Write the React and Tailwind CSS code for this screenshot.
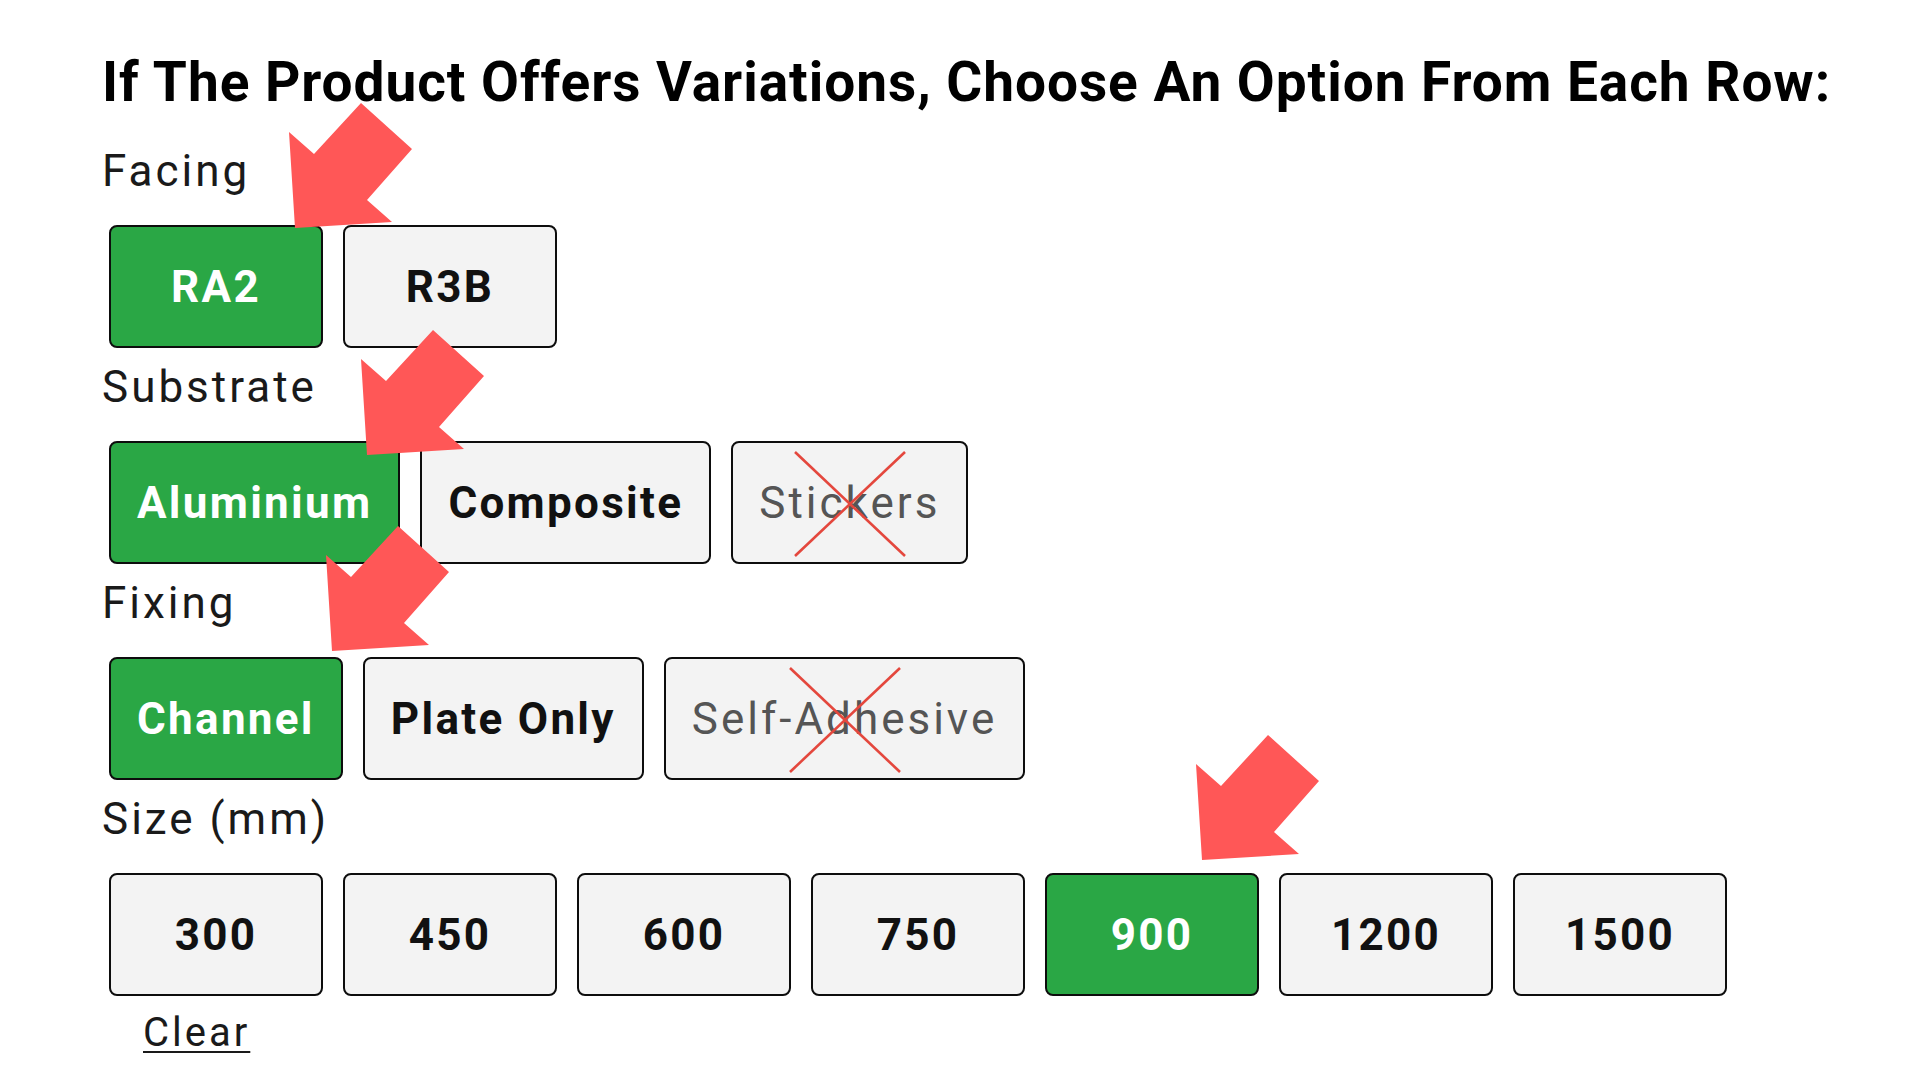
import React from "react";

// Option rows shown on the product page
const sections = [
  {
    label: "Facing",
    options: [{ text: "RA2", selected: true }, { text: "R3B" }],
  },
  {
    label: "Substrate",
    options: [
      { text: "Aluminium", selected: true },
      { text: "Composite" },
      { text: "Stickers", disabled: true },
    ],
  },
  {
    label: "Fixing",
    options: [
      { text: "Channel", selected: true },
      { text: "Plate Only" },
      { text: "Self-Adhesive", disabled: true },
    ],
  },
  {
    label: "Size (mm)",
    options: [
      { text: "300" },
      { text: "450" },
      { text: "600" },
      { text: "750" },
      { text: "900", selected: true },
      { text: "1200" },
      { text: "1500" },
    ],
  },
];

// Big red pointer arrows laid over the page
const arrows = [
  { left: 289, top: 103 },
  { left: 361, top: 330 },
  { left: 326, top: 526 },
  { left: 1196, top: 735 },
];

const Arrow = ({ left, top }) => (
  <svg
    width="124"
    height="126"
    viewBox="0 0 124 126"
    className="absolute"
    style={{ left, top }}
  >
    <polygon
      points="72,0 123,46 78,97 103,119 6,125 0,29 25,51"
      fill="#ff5757"
    />
  </svg>
);

const OptionButton = ({ option }) => {
  let tone = "bg-[#f3f3f3] text-[#111] font-bold tracking-[2.3px]";
  if (option.selected) tone = "bg-[#2aa745] text-white font-bold tracking-[2.3px]";
  if (option.disabled) tone = "bg-[#f3f3f3] text-[#555] font-normal tracking-[3px]";

  return (
    <button
      type="button"
      className={`relative flex h-[123px] min-w-[214px] items-center justify-center rounded-[8px] border-[2.5px] border-[#0d0d0d] px-[26px] text-[44px] leading-none ${tone}`}
    >
      {option.text}
      {option.disabled && (
        <svg
          width="112"
          height="106"
          viewBox="0 0 112 106"
          className="absolute left-1/2 top-[8px] -translate-x-1/2"
        >
          <line x1="1" y1="1" x2="111" y2="105" stroke="#e4473d" strokeWidth="2.6" />
          <line x1="111" y1="1" x2="1" y2="105" stroke="#e4473d" strokeWidth="2.6" />
        </svg>
      )}
    </button>
  );
};

export default function App() {
  return (
    <div className="relative min-h-screen bg-white font-[family-name:Roboto,sans-serif] text-[#111]">
      <div className="pl-[102px] pt-[50px]">
        <h1 className="text-[55px] font-bold leading-[64px] tracking-[0.95px] text-black">
          If The Product Offers Variations, Choose An Option From Each Row:
        </h1>

        <div className="mt-[31px] flex flex-col gap-[13px]">
          {sections.map((section) => (
            <div key={section.label}>
              <p className="text-[44px] leading-[52px] tracking-[3px] text-[#1a1a1a]">
                {section.label}
              </p>
              <div className="ml-[7px] mt-[28px] flex gap-[20px]">
                {section.options.map((option) => (
                  <OptionButton key={option.text} option={option} />
                ))}
              </div>
            </div>
          ))}
        </div>

        <a
          href="#"
          className="ml-[41px] mt-[13px] inline-block text-[40px] leading-[48px] tracking-[3px] text-[#1a1a1a] underline decoration-2 underline-offset-[5px]"
        >
          Clear
        </a>
      </div>

      {arrows.map((a, i) => (
        <Arrow key={i} left={a.left} top={a.top} />
      ))}
    </div>
  );
}
